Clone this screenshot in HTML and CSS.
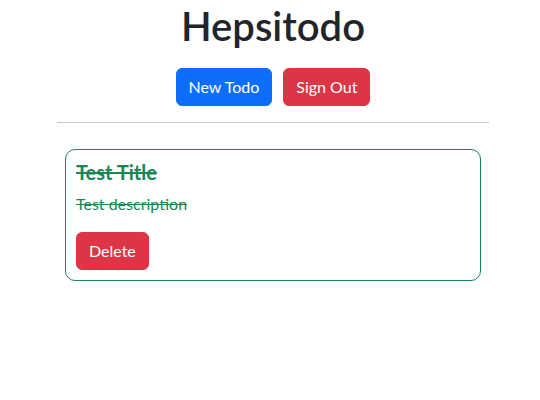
FILE: index.html
```html
<!DOCTYPE html>
<html lang="en">
<head>
<meta charset="utf-8">
<title>Hepsitodo</title>
<link rel="stylesheet" href="styles.css">
</head>
<body>
<div class="page">
  <h1 class="title">Hepsitodo</h1>
  <div class="actions">
    <button class="btn btn-primary">New Todo</button>
    <button class="btn btn-danger">Sign Out</button>
  </div>
  <hr class="divider">
  <div class="todo-list">
    <div class="todo done">
      <h5 class="todo-title">Test Title</h5>
      <p class="todo-desc">Test description</p>
      <button class="btn btn-danger">Delete</button>
    </div>
  </div>
</div>
</body>
</html>
```
FILE: styles.css
```css
* { box-sizing: border-box; }
body {
  margin: 0;
  font-family: "Lato", "Open Sans", sans-serif;
  font-size: 16px;
  line-height: 1.5;
  color: #212529;
  background: #fff;
}
.page {
  width: 432px;
  margin-left: 57px;
}
.title {
  margin: 2px 0 18px;
  font-size: 40px;
  font-weight: 600;
  line-height: 1.2;
  text-align: center;
}
.actions {
  display: flex;
  justify-content: center;
  gap: 11px;
}
.btn {
  font-family: inherit;
  font-size: 16px;
  line-height: 1.5;
  padding: 6px 12px;
  border: 1px solid transparent;
  border-radius: 6px;
  color: #fff;
  cursor: pointer;
}
.btn-primary { background: #0d6efd; border-color: #0d6efd; }
.btn-danger { background: #dc3545; border-color: #dc3545; }
.divider {
  margin: 16px 0;
  border: 0;
  border-top: 1px solid #c8c8c8;
}
.todo-list {
  padding: 10px 8px 0;
}
.todo {
  border: 1px solid #198754;
  border-radius: 10px;
  padding: 10px;
}
.todo-title {
  margin: 0 0 8px;
  font-size: 20px;
  font-weight: 700;
  line-height: 1.2;
}
.todo-desc {
  margin: 0 0 16px;
}
.done .todo-title,
.done .todo-desc {
  color: #198754;
  text-decoration: line-through;
}
```
